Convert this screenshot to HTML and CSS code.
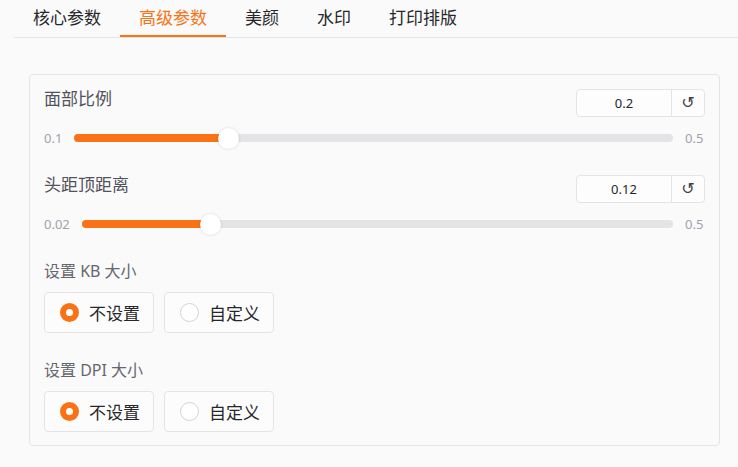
FILE: index.html
```html
<!DOCTYPE html>
<html lang="zh">
<head>
<meta charset="utf-8">
<link rel="stylesheet" href="styles.css">
</head>
<body>
<div class="page">
  <div class="tabs">
    <div class="tab">核心参数</div>
    <div class="tab active">高级参数</div>
    <div class="tab">美颜</div>
    <div class="tab">水印</div>
    <div class="tab">打印排版</div>
  </div>

  <div class="card">
    <div class="block">
      <div class="head">
        <span class="label">面部比例</span>
        <div class="numbox"><span class="num">0.2</span><span class="reset">↺</span></div>
      </div>
      <div class="slider">
        <span class="lim">0.1</span>
        <div class="track"><div class="fill" style="width:25.8%"></div><div class="thumb" style="left:25.8%"></div></div>
        <span class="lim">0.5</span>
      </div>
    </div>

    <div class="block">
      <div class="head">
        <span class="label">头距顶距离</span>
        <div class="numbox"><span class="num">0.12</span><span class="reset">↺</span></div>
      </div>
      <div class="slider">
        <span class="lim">0.02</span>
        <div class="track"><div class="fill" style="width:21.8%"></div><div class="thumb" style="left:21.8%"></div></div>
        <span class="lim">0.5</span>
      </div>
    </div>

    <div class="block">
      <span class="label small">设置 KB 大小</span>
      <div class="radios">
        <div class="radio"><span class="dot on"></span><span class="rtext">不设置</span></div>
        <div class="radio"><span class="dot"></span><span class="rtext">自定义</span></div>
      </div>
    </div>

    <div class="block">
      <span class="label small">设置 DPI 大小</span>
      <div class="radios">
        <div class="radio"><span class="dot on"></span><span class="rtext">不设置</span></div>
        <div class="radio"><span class="dot"></span><span class="rtext">自定义</span></div>
      </div>
    </div>
  </div>

  <div class="wm wm2">ModelScope</div>
</div>
</body>
</html>
```

FILE: styles.css
```css
* { box-sizing: border-box; }
html, body { margin: 0; padding: 0; }
body {
  background: #fafafa;
  font-family: "Noto Sans", "Noto Sans CJK SC", sans-serif;
  color: #27272a;
  width: 738px;
  height: 467px;
  overflow: hidden;
}
.page {
  position: relative;
  padding: 0 0 0 14px;
}
.tabs {
  display: flex;
  height: 38px;
  border-bottom: 1px solid #e4e4e7;
}
.tab {
  font-size: 17px;
  line-height: 36px;
  padding: 0 19px;
  height: 37px;
  color: #27272a;
  border-bottom: 2px solid transparent;
}
.tab.active {
  color: #f97316;
  border-bottom-color: #f97316;
}
.card {
  margin: 36px 18px 0 15px;
  border: 1px solid #e4e4e7;
  border-radius: 4px;
  background: #fafafa;
  padding: 14px 14px 13px 14px;
  display: flex;
  flex-direction: column;
  gap: 27px;
}
.block {
  display: flex;
  flex-direction: column;
  gap: 11px;
}
.head {
  display: flex;
  justify-content: space-between;
  align-items: flex-start;
}
.label {
  font-size: 17px;
  line-height: 20px;
  color: #52525b;
}
.label.small {
  font-size: 16px;
  line-height: 20px;
  color: #66666e;
}
.numbox {
  display: flex;
  width: 129px;
  height: 28px;
  border: 1px solid #e4e4e7;
  border-radius: 4px;
  background: #fdfdfd;
}
.num {
  width: 95px;
  text-align: center;
  font-size: 13px;
  line-height: 26px;
  color: #27272a;
  border-right: 1px solid #e4e4e7;
}
.reset {
  flex: 1;
  text-align: center;
  font-family: "DejaVu Sans", sans-serif;
  font-size: 16px;
  line-height: 26px;
  color: #3f3f46;
}
.slider {
  display: flex;
  align-items: center;
  height: 20px;
  gap: 12px;
}
.lim {
  font-size: 13px;
  color: #a1a1aa;
  line-height: 20px;
}
.slider .lim:last-child { width: 20px; }
.track {
  position: relative;
  flex: 1;
  height: 8px;
  border-radius: 4px;
  background: #e4e4e7;
}
.fill {
  height: 8px;
  border-radius: 4px;
  background: #f97316;
}
.thumb {
  position: absolute;
  top: 50%;
  width: 21px;
  height: 21px;
  margin: -10.5px 0 0 -10.5px;
  border-radius: 50%;
  background: #fff;
  box-shadow: 0 0 3px rgba(0,0,0,0.15);
}
.radios {
  display: flex;
  gap: 10px;
}
.radio {
  display: flex;
  align-items: center;
  gap: 10px;
  width: 110px;
  height: 41px;
  padding: 0 0 0 15px;
  border: 1px solid #e4e4e7;
  border-radius: 4px;
  background: #fcfcfc;
  font-size: 17px;
  color: #27272a;
}
.rtext { white-space: nowrap; }
.dot {
  width: 19px;
  height: 19px;
  border-radius: 50%;
  border: 1px solid #d4d4d8;
  background: #fff;
  flex: none;
}
.dot.on {
  border: 6.5px solid #f97316;
  background: #fff;
}
.wm {
  position: absolute;
  font-family: "DejaVu Sans", sans-serif;
  font-weight: bold;
  font-size: 22px;
  color: rgba(0,0,0,0.025);
  transform: rotate(-22deg);
  pointer-events: none;
}
.wm2 { left: 318px; top: 370px; }
```
